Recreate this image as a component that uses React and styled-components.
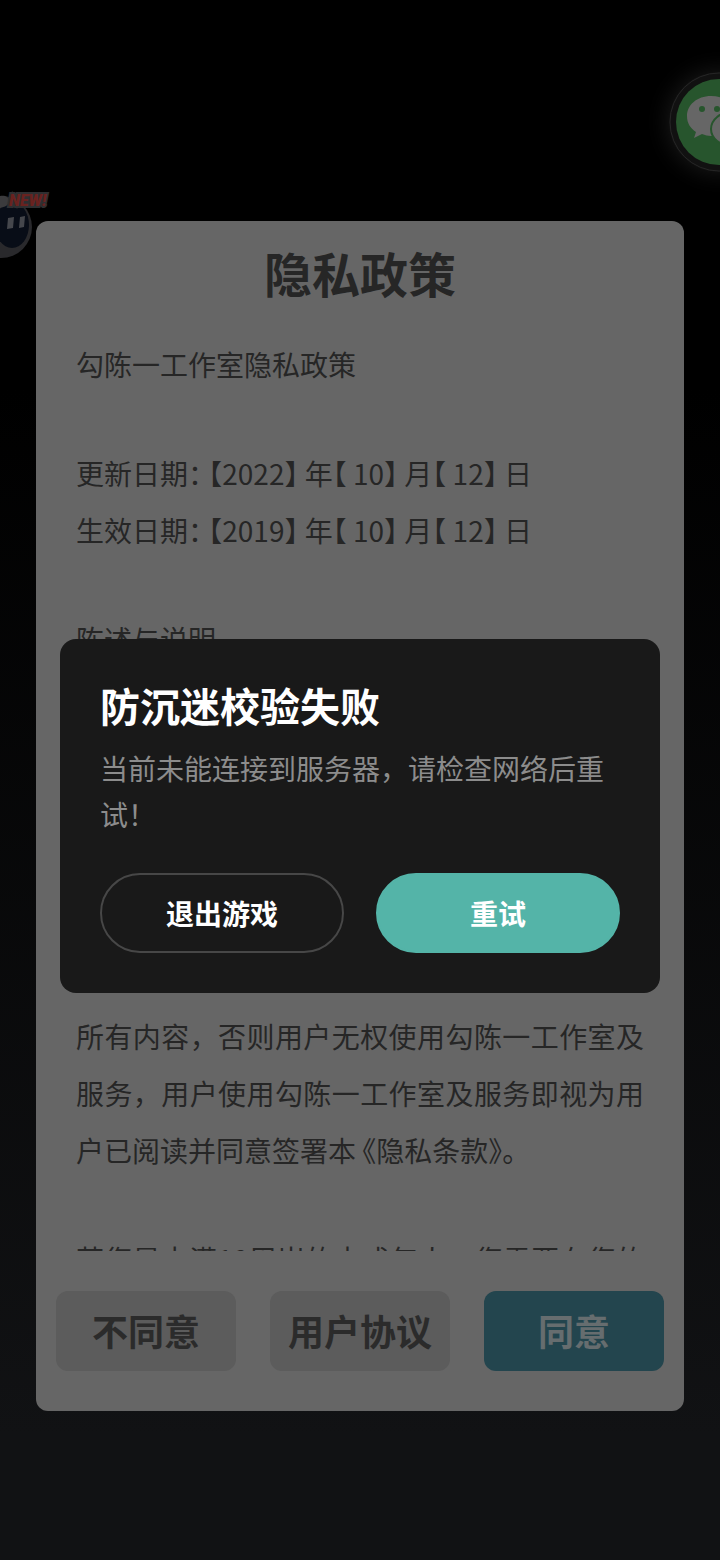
import styled, { createGlobalStyle } from "styled-components";

const GlobalStyle = createGlobalStyle`
  * {
    box-sizing: border-box;
  }
  html,
  body {
    margin: 0;
    background: #000;
  }
  body,
  button {
    font-family: "Noto Sans CJK SC", sans-serif;
  }
`;

const Page = styled.main`
  position: relative;
  display: flex;
  flex-direction: column;
  align-items: center;
  justify-content: center;
  height: 100vh;
  padding-top: 72px;
  overflow: hidden;
  background: linear-gradient(#000 0%, #000 25%, #111214 92%);
`;

const Card = styled.section`
  display: flex;
  flex-direction: column;
  width: 90%;
  height: 80%;
  padding: 16px 20px 40px;
  border-radius: 12px;
  background: #666;
  color: #262626;
`;

const CardTitle = styled.h1`
  margin: 0 0 29px;
  font-size: 48px;
  line-height: 70px;
  font-weight: 700;
  text-align: center;
`;

const Policy = styled.div`
  flex: 1;
  min-height: 0;
  padding: 0 20px;
  overflow-y: auto;
  scrollbar-width: none;
  font-size: 28px;
  line-height: 57px;
  text-align: justify;
`;

const Paragraph = styled.p`
  margin: 0 0 ${({ $gap = 0 }) => $gap}px;
`;

// brackets take half an em instead of a full one
const Tight = styled.span`
  font-feature-settings: "halt";
`;

const CardActions = styled.div`
  display: flex;
  justify-content: space-between;
  margin-top: 40px;
`;

const CardButton = styled.button`
  width: 180px;
  height: 80px;
  padding: 0 0 2px;
  border: 0;
  border-radius: 12px;
  font-size: 36px;
  font-weight: 700;
  background: ${({ $primary }) => ($primary ? "#23454e" : "#5c5c5c")};
  color: ${({ $primary }) => ($primary ? "#666d6f" : "#2b2b2b")};
`;

const Overlay = styled.div`
  position: absolute;
  inset: 72px 0 0;
  display: flex;
  align-items: center;
  justify-content: center;
  padding: 0 60px;
`;

const Dialog = styled.div`
  width: 100%;
  max-width: 600px;
  padding: 38px 40px 40px;
  border-radius: 16px;
  background: #191919;
`;

const DialogTitle = styled.h2`
  margin: 0 0 12px;
  font-size: 40px;
  line-height: 56px;
  font-weight: 700;
  color: #fff;
`;

const DialogText = styled.p`
  margin: 0 0 36px;
  font-size: 28px;
  line-height: 46px;
  color: #8c8c8c;
`;

const DialogActions = styled.div`
  display: flex;
  gap: 32px;
`;

const DialogButton = styled.button`
  flex: 1;
  height: 80px;
  padding: 0;
  border: 2px solid ${({ $primary }) => ($primary ? "#54b4a8" : "#474747")};
  border-radius: 40px;
  font-size: 28px;
  font-weight: 700;
  background: ${({ $primary }) => ($primary ? "#54b4a8" : "transparent")};
  color: #fff;
`;

const WeChatButton = styled.button`
  position: absolute;
  top: 72px;
  right: -49px;
  width: 100px;
  height: 100px;
  padding: 0;
  border: 0;
  border-radius: 50%;
  background: #111;
  box-shadow: 0 0 24px #1c1c1c;
`;

const Mascot = styled.button`
  position: absolute;
  top: 188px;
  left: 0;
  width: 56px;
  height: 74px;
  padding: 0;
  border: 0;
  background: none;
`;

const NewTag = styled.span`
  position: absolute;
  top: 5px;
  left: 9px;
  font-family: Roboto, sans-serif;
  font-size: 16px;
  line-height: 16px;
  font-weight: 900;
  font-style: italic;
  color: #6a221f;
  -webkit-text-stroke: 4px #2f2f31;
  paint-order: stroke fill;
`;

const WeChatIcon = () => (
  <svg width="100" height="100" viewBox="0 0 100 100" aria-hidden="true">
    <circle cx="50" cy="50" r="49" fill="#111" stroke="#262626" strokeWidth="1" />
    <circle cx="50" cy="50" r="43" fill="#27552d" />
    <path
      d="M42 24C28 24 18 33 18 44c0 7 3 12 9 16l-2 6 8-4c3 1 6 2 9 2 14 0 24-8 24-20S56 24 42 24Z"
      fill="#666"
    />
    <circle cx="33" cy="37" r="3" fill="#27552d" />
    <circle cx="48" cy="37" r="3" fill="#27552d" />
    <ellipse cx="63" cy="57" rx="21" ry="17" fill="#666" stroke="#27552d" strokeWidth="2" />
  </svg>
);

const MascotIcon = () => (
  <svg width="56" height="74" viewBox="0 0 56 74" aria-hidden="true">
    <circle cx="1" cy="39" r="31" fill="#29292c" />
    <ellipse cx="12" cy="37" rx="17" ry="23" fill="#080d17" />
    <path d="M0 8c5-1 9 1 9 5s-4 6-9 7Z" fill="#3b3b3d" />
    <path d="M8 30l6-1-1 11-6 1ZM20 29l5-1-1 11-5 1Z" fill="#45474c" />
  </svg>
);

const App = () => (
  <Page>
    <GlobalStyle />
    <Mascot aria-label="新活动">
      <MascotIcon />
      <NewTag>NEW!</NewTag>
    </Mascot>
    <WeChatButton aria-label="微信登录">
      <WeChatIcon />
    </WeChatButton>

    <Card>
      <CardTitle>隐私政策</CardTitle>
      <Policy>
        <Paragraph $gap={52}>勾陈一工作室隐私政策</Paragraph>
        <Paragraph>
          <Tight>更新日期： 【2022】 年【 10】 月【 12】 日</Tight>
        </Paragraph>
        <Paragraph $gap={52}>
          <Tight>生效日期： 【2019】 年【 10】 月【 12】 日</Tight>
        </Paragraph>
        <Paragraph $gap={56}>陈述与说明</Paragraph>
        <Paragraph $gap={56}>
          勾陈一工作室非常重视用户的隐私和个人信息保护，用户在使用我们的产品与服务时，请务必仔细阅读并充分理解本条款的全部内容，用户应当接受本条款中的以下
        </Paragraph>
        <Paragraph $gap={52}>
          所有内容，否则用户无权使用勾陈一工作室及服务，用户使用勾陈一工作室及服务即视为用户已阅读并同意签署本
          <Tight> 《隐私条款》</Tight>。
        </Paragraph>
        <Paragraph>
          若您是未满18周岁的未成年人，您需要在您的监护人陪同下阅读本条款。
        </Paragraph>
      </Policy>
      <CardActions>
        <CardButton>不同意</CardButton>
        <CardButton>用户协议</CardButton>
        <CardButton $primary>同意</CardButton>
      </CardActions>
    </Card>

    <Overlay>
      <Dialog role="alertdialog" aria-labelledby="dialog-title" aria-describedby="dialog-text">
        <DialogTitle id="dialog-title">防沉迷校验失败</DialogTitle>
        <DialogText id="dialog-text">当前未能连接到服务器，请检查网络后重试！</DialogText>
        <DialogActions>
          <DialogButton>退出游戏</DialogButton>
          <DialogButton $primary>重试</DialogButton>
        </DialogActions>
      </Dialog>
    </Overlay>
  </Page>
);

export default App;
